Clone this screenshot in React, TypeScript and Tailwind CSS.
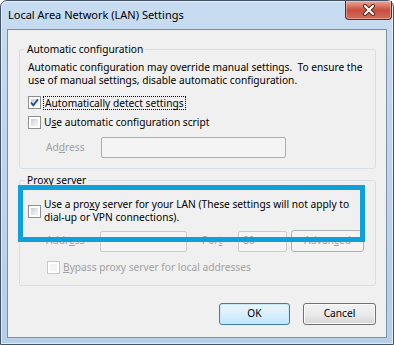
import React from 'react'

const font = { fontFamily: '"Noto Sans", "Open Sans", sans-serif' }

function CheckBox({ checked = false, disabled = false }: { checked?: boolean; disabled?: boolean }) {
  return (
    <span
      className={`relative flex w-[13px] h-[13px] shrink-0 border bg-white p-[2px] ${
        disabled ? 'border-[#c8c8c8]' : 'border-[#8e8f8f]'
      }`}
    >
      <span
        className={`flex-1 ${
          disabled ? 'bg-[#f4f4f4]' : 'bg-gradient-to-br from-[#c6cbd1] via-[#e2e4e7] to-[#f6f6f6]'
        }`}
      />
      {checked && (
        <svg className="absolute left-0 top-0" width="11" height="11" viewBox="0 0 11 11">
          <path d="M2 5.5 L4.3 8.3 L9 2.2" fill="none" stroke="#2b4a8c" strokeWidth="1.8" />
        </svg>
      )}
    </span>
  )
}

function TextBox({ w, value, dim = false }: { w: string; value?: string; dim?: boolean }) {
  return (
    <div
      className={`${w} h-[21px] shrink-0 rounded-[2px] border ${
        dim ? 'border-[#c9cbcd] bg-[#f4f4f4]' : 'border-[#abadb3] bg-[#f4f4f4]'
      } px-[4px] text-[10.2px] leading-[17px] text-[#a0a0a0]`}
    >
      {value}
    </div>
  )
}

function Button({ children, primary = false, disabled = false, w }: { children: React.ReactNode; primary?: boolean; disabled?: boolean; w: string }) {
  const look = disabled
    ? 'border-[#adb2b5] bg-[#f4f4f4] text-[#a0a0a0]'
    : primary
    ? 'border-[#3c7fb1] bg-gradient-to-b from-[#eaf6fd] via-[#d9f0fc] to-[#bee6fd] text-black shadow-[inset_0_0_0_1px_#c9e7f8]'
    : 'border-[#707070] bg-gradient-to-b from-[#f2f2f2] via-[#ebebeb] to-[#d6d6d6] text-black shadow-[inset_0_0_0_1px_#fcfcfc]'
  return (
    <div className={`${w} h-[22px] shrink-0 rounded-[3px] border flex items-center justify-center text-[10.2px] ${look}`}>
      {children}
    </div>
  )
}

function Legend({ children }: { children: React.ReactNode }) {
  return <legend className="ml-[-3px] px-[2px] text-[10.2px] leading-[15px] text-black">{children}</legend>
}

export default function App() {
  return (
    <div className="w-[394px] h-[345px] bg-white text-black" style={font}>
      <div className="w-full h-full flex flex-col rounded-t-[7px] border border-[#445366] bg-gradient-to-b from-[#c8dcf1] via-[#bdd4ec] to-[#b6cee8] px-[6px] pb-[6px] shadow-[inset_0_0_0_1px_rgba(255,255,255,0.55)]">
        {/* Title bar */}
        <div className="h-[28px] flex items-start justify-between shrink-0">
          <div className="pl-[1px] pt-[6px] text-[11px] leading-[16px] text-black">Local Area Network (LAN) Settings</div>
          <div className="mr-[-5px] w-[47px] h-[19px] rounded-b-[4px] border border-t-0 border-[#5e2b22] bg-gradient-to-b from-[#e9a897] via-[#c94e41] to-[#d06c59] shadow-[inset_0_0_0_1px_rgba(255,220,210,0.45)] flex items-center justify-center">
            <svg width="14" height="12" viewBox="0 0 14 12">
              <path d="M3 2 L11 10 M11 2 L3 10" stroke="#5a2119" strokeWidth="4" strokeLinecap="round" />
              <path d="M3 2 L11 10 M11 2 L3 10" stroke="#ffffff" strokeWidth="2.2" strokeLinecap="round" />
            </svg>
          </div>
        </div>

        {/* Client area */}
        <div className="relative flex-1 flex flex-col border border-[#7b8fa5] bg-[#f0f0f0] pl-[11px] pr-[10px] pt-[12px] pb-[12px]">
          <fieldset className="rounded-[3px] border border-[#d5dfe5] pl-[8px] pr-[6px] pb-[10px]">
            <Legend>Automatic configuration</Legend>
            <div className="mt-[4px] text-[10.2px] leading-[13px] whitespace-nowrap">
              Automatic configuration may override manual settings.&nbsp; To ensure the
              <br />
              use of manual settings, disable automatic configuration.
            </div>
            <div className="mt-[9px] h-[13px] flex items-center gap-[3px] text-[10.2px]">
              <CheckBox checked />
              <span className="outline outline-1 outline-dotted outline-black leading-[12px] px-[1px]">
                Automatically detect settings
              </span>
            </div>
            <div className="mt-[7px] h-[13px] flex items-center gap-[3px] text-[10.2px]">
              <CheckBox />
              <span>
                U<u>s</u>e automatic configuration script
              </span>
            </div>
            <div className="mt-[8px] flex items-center">
              <span className="w-[73px] pl-[18px] text-[10.2px] text-[#a0a0a0]">
                Ad<u>d</u>ress
              </span>
              <TextBox w="w-[185px]" />
            </div>
          </fieldset>

          <fieldset className="mt-[4px] rounded-[3px] border border-[#d5dfe5] pl-[8px] pr-[6px] pb-[11px]">
            <Legend>Proxy server</Legend>
            <div className="mt-[10px] flex items-center gap-[3px] text-[10.2px]">
              <CheckBox />
              <span className="leading-[13px] whitespace-nowrap">
                Use a pro<u>x</u>y server for your LAN (These settings will not apply to
                <br />
                dial-up or VPN connections).
              </span>
            </div>
            <div className="mt-[6px] flex items-center text-[10.2px] text-[#a0a0a0]">
              <span className="w-[72px] pl-[18px]">
                Addr<u>e</u>ss
              </span>
              <TextBox w="w-[87px]" dim />
              <span className="w-[51px] pl-[15px]">
                Por<u>t</u>
              </span>
              <TextBox w="w-[49px]" value="80" dim />
              <div className="ml-[4px]">
                <Button w="w-[73px]" disabled>
                  Advan<u>c</u>ed
                </Button>
              </div>
            </div>
            <div className="mt-[9px] h-[13px] flex items-center gap-[3px] pl-[19px] text-[10.2px] text-[#a0a0a0]">
              <CheckBox disabled />
              <span>
                <u>B</u>ypass proxy server for local addresses
              </span>
            </div>
          </fieldset>

          <div className="mt-auto flex justify-end gap-[13px]">
            <Button w="w-[71px]" primary>
              OK
            </Button>
            <Button w="w-[73px]">Cancel</Button>
          </div>

          {/* Highlight annotation over the proxy option */}
          <div className="absolute left-[10px] top-[155px] w-[347px] h-[57px] border-[5px] border-[#0fa0dc]" />
        </div>
      </div>
    </div>
  )
}
